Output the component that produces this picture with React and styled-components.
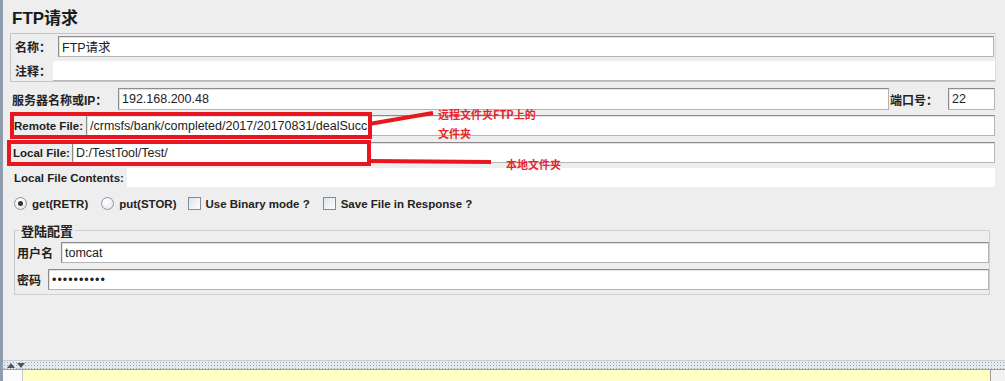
import React from "react";
import styled, { createGlobalStyle } from "styled-components";

const GlobalStyle = createGlobalStyle`
  html, body {
    margin: 0;
    padding: 0;
    background: #eeeeee;
  }
`;

const Page = styled.div`
  position: relative;
  width: 1005px;
  height: 381px;
  box-sizing: border-box;
  border-left: 3px solid #8e9cae;
  background: #eeeeee;
  display: flex;
  flex-direction: column;
  font-family: "Liberation Sans", "Noto Sans CJK SC", sans-serif;
  font-size: 12px;
  color: #222;
  overflow: hidden;
`;

const Main = styled.div`
  flex: 1;
  padding: 0 10px 0 7px;
  display: flex;
  flex-direction: column;
`;

const Title = styled.h1`
  margin: 0;
  height: 33px;
  display: flex;
  align-items: center;
  padding-left: 2px;
  font-size: 17px;
  font-weight: bold;
  color: #1a1a1a;
`;

const Panel = styled.div`
  border: 1px solid #c4c4c4;
  border-right-color: #dcdcdc;
  padding: 2px 0 1px 3px;
  display: flex;
  flex-direction: column;
  gap: 4px;
  margin-right: -1px;
`;

const Row = styled.div`
  display: flex;
  align-items: center;
  height: ${(p) => p.h || 21}px;
  margin-top: ${(p) => p.mt || 0}px;
  padding-left: ${(p) => p.pl || 0}px;
  gap: ${(p) => p.gap || 0}px;
`;

const Label = styled.span`
  font-weight: bold;
  font-size: ${(p) => (p.latin ? "11.5px" : "12px")};
  white-space: nowrap;
  width: ${(p) => (p.w ? `${p.w}px` : "auto")};
  flex-shrink: 0;
  padding-left: ${(p) => p.pl || 0}px;
  color: #222;
`;

const Input = styled.div`
  flex: ${(p) => (p.w ? "none" : 1)};
  width: ${(p) => (p.w ? `${p.w}px` : "auto")};
  height: 100%;
  box-sizing: border-box;
  background: #fff;
  border: 1px solid #8c8c8c;
  border-right-color: #b4b4b4;
  border-bottom-color: #b4b4b4;
  box-shadow: inset 1px 1px 0 #e2e2e2;
  display: flex;
  align-items: center;
  padding-left: 3px;
  font-size: 12.5px;
  color: #222;
  white-space: nowrap;
  overflow: hidden;
`;

const Area = styled.div`
  flex: 1;
  height: 100%;
  background: #fff;
  border-bottom: ${(p) => (p.flat ? "none" : "1px solid #b8b8b8")};
`;

const Options = styled.div`
  display: flex;
  align-items: center;
  height: 17px;
  margin-top: 8px;
  padding-left: 4px;
  font-weight: bold;
  font-size: 11.5px;
`;

const Option = styled.label`
  display: flex;
  align-items: center;
  gap: 5px;
  margin-right: ${(p) => p.mr || 12}px;
  white-space: nowrap;
`;

const Radio = styled.span`
  width: 11px;
  height: 11px;
  border-radius: 50%;
  border: 1px solid #8a96a4;
  background: radial-gradient(circle at 40% 35%, #ffffff, #dfe4ea);
  display: flex;
  align-items: center;
  justify-content: center;
  &::after {
    content: "";
    width: 5px;
    height: 5px;
    border-radius: 50%;
    background: ${(p) => (p.checked ? "#333" : "transparent")};
  }
`;

const Check = styled.span`
  width: 13px;
  height: 13px;
  box-sizing: border-box;
  border: 1px solid #7f8b99;
  background: linear-gradient(135deg, #dde3ea, #ffffff);
`;

const Group = styled.fieldset`
  margin: 9px 5px 0 4px;
  padding: 2px 0 4px 1px;
  border: 1px solid #cfcfcf;
  border-left-color: #c8c8c8;
  display: flex;
  flex-direction: column;
  gap: 6px;
  min-width: 0;

  legend {
    font-size: 13px;
    font-weight: bold;
    padding: 0 2px;
    margin-left: 3px;
    color: #222;
  }
`;

const Splitter = styled.div`
  height: 8px;
  border-top: 1px solid #c9ced6;
  background-color: #e6e9ee;
  background-image: radial-gradient(#9aa4b2 0.6px, transparent 0.8px);
  background-size: 3px 3px;
  display: flex;
  align-items: center;
  gap: 2px;
  padding-left: 4px;
`;

const Arrow = styled.span`
  width: 0;
  height: 0;
  border-left: 4px solid transparent;
  border-right: 4px solid transparent;
  ${(p) =>
    p.up
      ? "border-bottom: 5px solid #4a5566;"
      : "border-top: 5px solid #4a5566;"}
`;

const Bottom = styled.div`
  height: 11px;
  display: flex;
  border-top: 1px solid #9aa3ae;
`;

const Gutter = styled.div`
  width: 19px;
  background: #fbfbfb;
  border-right: 1px solid #c8c8c8;
`;

const Yellow = styled.div`
  flex: 1;
  background: #ffffc4;
  border-right: 1px solid #9a9a9a;
`;

const Scroll = styled.div`
  width: 14px;
  background: #f2f2f2;
`;

const RedBox = styled.div`
  position: absolute;
  box-sizing: border-box;
  border: 4px solid #e8161f;
  pointer-events: none;
`;

const Note = styled.span`
  position: absolute;
  color: #e5262d;
  font-size: 11px;
  font-weight: bold;
  white-space: nowrap;
  font-family: "Noto Sans CJK SC", "Liberation Sans", sans-serif;
`;

const Lines = styled.svg`
  position: absolute;
  left: 0;
  top: 0;
  pointer-events: none;
`;

export default function App() {
  return (
    <>
      <GlobalStyle />
      <Page>
        <Main>
          <Title>FTP请求</Title>
          <Panel>
            <Row>
              <Label w={43} pl={1}>名称：</Label>
              <Input style={{ marginRight: 1 }}>FTP请求</Input>
            </Row>
            <Row h={19}>
              <Label w={38} pl={1}>注释：</Label>
              <Area />
            </Row>
          </Panel>
          <Row h={22} mt={6} pl={2}>
            <Label w={106}>服务器名称或IP：</Label>
            <Input>192.168.200.48</Input>
            <Label w={58} pl={1}>端口号：</Label>
            <Input w={47}>22</Input>
          </Row>
          <Row mt={5} pl={4}>
            <Label latin w={72}>Remote File:</Label>
            <Input>/crmsfs/bank/completed/2017/20170831/dealSucc</Input>
          </Row>
          <Row mt={6} pl={3}>
            <Label latin w={59}>Local File:</Label>
            <Input>D:/TestTool/Test/</Input>
          </Row>
          <Row h={19} mt={5} pl={4}>
            <Label latin w={113}>Local File Contents:</Label>
            <Area flat />
          </Row>
          <Options>
            <Option mr={13}>
              <Radio checked />
              get(RETR)
            </Option>
            <Option mr={11}>
              <Radio />
              put(STOR)
            </Option>
            <Option mr={13}>
              <Check />
              Use Binary mode ?
            </Option>
            <Option>
              <Check />
              Save File in Response ?
            </Option>
          </Options>
          <Group>
            <legend>登陆配置</legend>
            <Row>
              <Label w={44} pl={1}>用户名</Label>
              <Input>tomcat</Input>
            </Row>
            <Row>
              <Label w={31} pl={1}>密码</Label>
              <Input style={{ letterSpacing: "1px" }}>••••••••••</Input>
            </Row>
          </Group>
        </Main>
        <Splitter>
          <Arrow up />
          <Arrow />
        </Splitter>
        <Bottom>
          <Gutter />
          <Yellow />
          <Scroll />
        </Bottom>

        <RedBox style={{ left: 7, top: 112, width: 362, height: 27 }} />
        <RedBox style={{ left: 4, top: 140, width: 364, height: 26 }} />
        <Lines width="1005" height="381">
          <path d="M366 124 L430 113" stroke="#e8161f" strokeWidth="4" fill="none" />
          <path d="M366 161 L488 162" stroke="#e8161f" strokeWidth="4" fill="none" />
        </Lines>
        <Note style={{ left: 435, top: 106 }}>远程文件夹FTP上的</Note>
        <Note style={{ left: 435, top: 125 }}>文件夹</Note>
        <Note style={{ left: 503, top: 156 }}>本地文件夹</Note>
      </Page>
    </>
  );
}
